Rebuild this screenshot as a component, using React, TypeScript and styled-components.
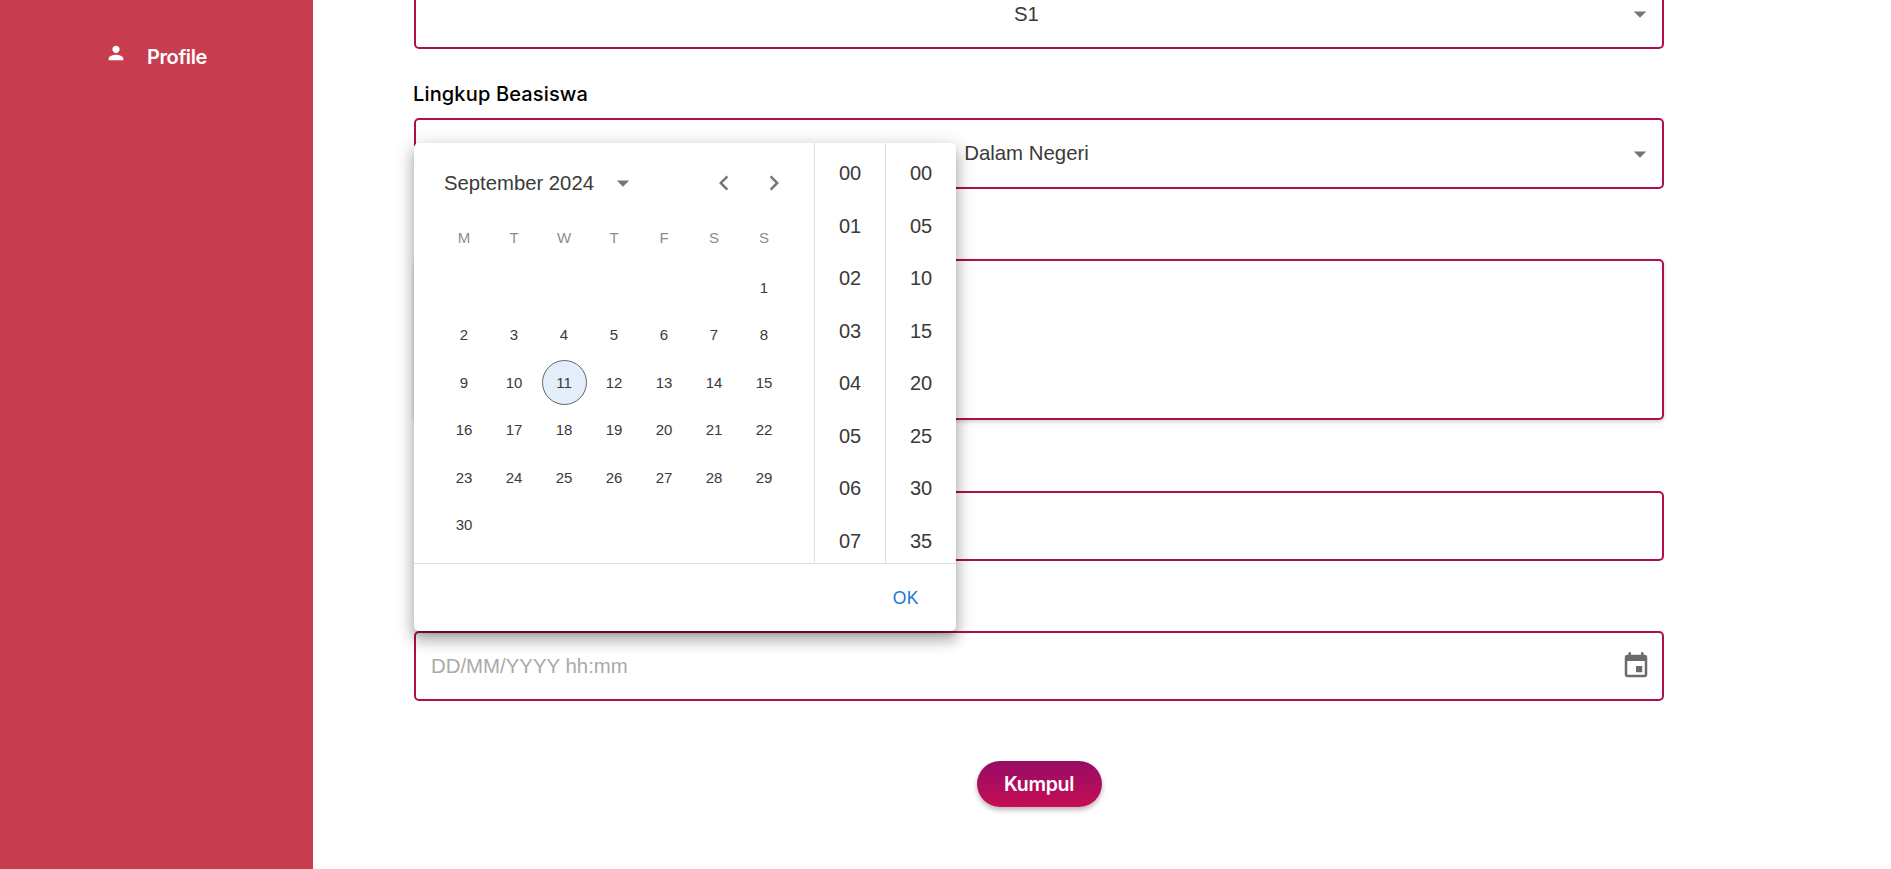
import React from "react";
import styled, { createGlobalStyle } from "styled-components";

const Global = createGlobalStyle`
  html, body { margin: 0; padding: 0; background: #fff; }
  * { box-sizing: border-box; }
`;

const Page = styled.div`
  display: flex;
  width: 100%;
  height: 100vh;
  overflow: hidden;
  font-family: "Liberation Sans", Arial, sans-serif;
`;

const Sidebar = styled.aside`
  flex: 0 0 313px;
  background: #c83c50;
  padding: 41px 0 0 105px;
`;

const NavItem = styled.div`
  display: flex;
  align-items: center;
  gap: 20px;
  color: #fff;
  font-family: Inter, "Open Sans", sans-serif;
  font-weight: 600;
  font-size: 20px;
  line-height: 32px;
  letter-spacing: -0.4px;
`;

const PersonIcon = styled.svg`
  width: 22px;
  height: 22px;
  fill: #fff;
  margin-top: -9px;
`;

const Main = styled.main`
  position: relative;
  flex: 1;
  overflow: hidden;
  padding: 0 227px 0 101px;
`;

const Form = styled.form`
  display: flex;
  flex-direction: column;
  margin-top: -21px;
`;

const LabelRow = styled.div<{ $h: number }>`
  height: ${(p) => p.$h}px;
  display: flex;
  align-items: flex-end;
  padding-bottom: 12px;
  margin-left: -1px;
  color: #000;
  font-family: Inter, "Open Sans", sans-serif;
  font-weight: 500;
  font-size: 20px;
  line-height: 24px;
  letter-spacing: 0.15px;
`;

const Field = styled.div<{ $h: number; $shadow?: boolean }>`
  position: relative;
  height: ${(p) => p.$h}px;
  border: 2px solid #b00e50;
  border-radius: 5px;
  background: #fff;
  display: flex;
  align-items: center;
  box-shadow: ${(p) => (p.$shadow ? "0 2px 4px rgba(0,0,0,.18)" : "none")};
`;

const SelectValue = styled.div`
  flex: 1;
  text-align: center;
  padding-left: 37px;
  padding-right: 25px;
  font-size: 20.4px;
  color: #3a3a3a;
`;

const Caret = styled.svg`
  width: 30px;
  height: 30px;
  fill: #757575;
  flex: none;
`;

const SelectCaret = styled(Caret)`
  margin-right: 7px;
`;

const Placeholder = styled.div`
  flex: 1;
  padding-left: 15px;
  font-size: 20.4px;
  color: #aaaaaa;
`;

const CalendarIcon = styled.svg`
  width: 30px;
  height: 30px;
  fill: #6b6b6b;
  margin-right: 11px;
  flex: none;
`;

const SubmitRow = styled.div`
  display: flex;
  justify-content: center;
  margin-top: 60px;
`;

const Submit = styled.button`
  width: 125px;
  height: 46px;
  border: none;
  border-radius: 23px;
  background: linear-gradient(180deg, #960c66 0%, #c60d54 100%);
  box-shadow: 0 3px 5px rgba(0, 0, 0, 0.28);
  color: #fff;
  font-family: Inter, "Open Sans", sans-serif;
  font-weight: 600;
  font-size: 19.5px;
  letter-spacing: -0.3px;
  padding: 0;
`;

const Popup = styled.div`
  position: absolute;
  left: 101px;
  top: 143px;
  width: 542px;
  height: 488px;
  background: #fff;
  border-radius: 5px;
  display: flex;
  flex-direction: column;
  overflow: hidden;
  box-shadow: 0 6px 6px -4px rgba(0, 0, 0, 0.26), 0 10px 13px 1px rgba(0, 0, 0, 0.18),
    0 4px 18px 3px rgba(0, 0, 0, 0.16);
`;

const PopupBody = styled.div`
  display: flex;
  height: 421px;
  border-bottom: 1px solid #dedede;
`;

const Calendar = styled.div`
  flex: 0 0 400px;
`;

const CalHeader = styled.div`
  display: flex;
  align-items: center;
  height: 80px;
  padding: 0 25px 0 30px;
  color: #3a3a3a;
  font-size: 20.3px;
`;

const MonthCaret = styled(Caret)`
  margin-left: 14px;
`;

const NavGroup = styled.div`
  display: flex;
  gap: 20px;
  margin-left: auto;
`;

const Grid = styled.div`
  display: grid;
  grid-template-columns: repeat(7, 50px);
  padding-left: 25px;
`;

const WeekRow = styled(Grid)`
  height: 28px;
  align-items: center;
  margin-bottom: 12.5px;
`;

const WeekDay = styled.span`
  text-align: center;
  font-size: 15px;
  color: #8d8d8d;
`;

const DayCell = styled.div`
  height: 47.5px;
  display: flex;
  align-items: center;
  justify-content: center;
  font-size: 15px;
  color: #3a3a3a;
`;

const Today = styled.span`
  width: 45px;
  height: 45px;
  display: flex;
  align-items: center;
  justify-content: center;
  border-radius: 50%;
  border: 1px solid #5f6770;
  background: #e4eefa;
`;

const TimeColumn = styled.div`
  flex: 0 0 71px;
  border-left: 1px solid #dedede;
  padding-top: 4.5px;
  overflow: hidden;
`;

const TimeItem = styled.div`
  height: 52.5px;
  display: flex;
  align-items: center;
  justify-content: center;
  font-size: 20px;
  color: #3a3a3a;
`;

const Footer = styled.div`
  flex: 1;
  display: flex;
  align-items: center;
  justify-content: flex-end;
  padding: 1px 37px 0 0;
`;

const OkButton = styled.span`
  color: #1976d2;
  font-size: 17.5px;
  letter-spacing: 0.5px;
`;

const caret = "M7 10l5 5 5-5z";
const weekdays = ["M", "T", "W", "T", "F", "S", "S"];
const days: (number | null)[] = [
  null, null, null, null, null, null,
  ...Array.from({ length: 30 }, (_, i) => i + 1),
];
const hours = ["00", "01", "02", "03", "04", "05", "06", "07"];
const minutes = ["00", "05", "10", "15", "20", "25", "30", "35"];

export default function App() {
  return (
    <>
      <Global />
      <Page>
        <Sidebar>
          <NavItem>
            <PersonIcon viewBox="0 0 24 24">
              <path d="M12 12c2.21 0 4-1.79 4-4s-1.79-4-4-4-4 1.79-4 4 1.79 4 4 4zm0 2c-2.67 0-8 1.34-8 4v2h16v-2c0-2.66-5.33-4-8-4z" />
            </PersonIcon>
            Profile
          </NavItem>
        </Sidebar>
        <Main>
          <Form>
            <Field $h={70}>
              <SelectValue>S1</SelectValue>
              <SelectCaret viewBox="0 0 24 24"><path d={caret} /></SelectCaret>
            </Field>
            <LabelRow $h={69}>Lingkup Beasiswa</LabelRow>
            <Field $h={71}>
              <SelectValue>Dalam Negeri</SelectValue>
              <SelectCaret viewBox="0 0 24 24"><path d={caret} /></SelectCaret>
            </Field>
            <LabelRow $h={70} />
            <Field $h={161} $shadow />
            <LabelRow $h={71} />
            <Field $h={70} />
            <LabelRow $h={70} />
            <Field $h={70}>
              <Placeholder>DD/MM/YYYY hh:mm</Placeholder>
              <CalendarIcon viewBox="0 0 24 24">
                <path d="M17 12h-5v5h5v-5zM16 1v2H8V1H6v2H5c-1.11 0-1.99.9-1.99 2L3 19c0 1.1.89 2 2 2h14c1.1 0 2-.9 2-2V5c0-1.1-.9-2-2-2h-1V1h-2zm3 18H5V8h14v11z" />
              </CalendarIcon>
            </Field>
            <SubmitRow>
              <Submit type="button">Kumpul</Submit>
            </SubmitRow>
          </Form>
          <Popup>
            <PopupBody>
              <Calendar>
                <CalHeader>
                  September 2024
                  <MonthCaret viewBox="0 0 24 24"><path d={caret} /></MonthCaret>
                  <NavGroup>
                    <Caret viewBox="0 0 24 24"><path d="M15.41 7.41 14 6l-6 6 6 6 1.41-1.41L10.83 12z" /></Caret>
                    <Caret viewBox="0 0 24 24"><path d="M10 6 8.59 7.41 13.17 12l-4.58 4.59L10 18l6-6z" /></Caret>
                  </NavGroup>
                </CalHeader>
                <WeekRow>
                  {weekdays.map((d, i) => (
                    <WeekDay key={i}>{d}</WeekDay>
                  ))}
                </WeekRow>
                <Grid>
                  {days.map((d, i) => (
                    <DayCell key={i}>{d === 11 ? <Today>{d}</Today> : d}</DayCell>
                  ))}
                </Grid>
              </Calendar>
              <TimeColumn>
                {hours.map((h) => (
                  <TimeItem key={h}>{h}</TimeItem>
                ))}
              </TimeColumn>
              <TimeColumn>
                {minutes.map((m) => (
                  <TimeItem key={m}>{m}</TimeItem>
                ))}
              </TimeColumn>
            </PopupBody>
            <Footer>
              <OkButton>OK</OkButton>
            </Footer>
          </Popup>
        </Main>
      </Page>
    </>
  );
}
